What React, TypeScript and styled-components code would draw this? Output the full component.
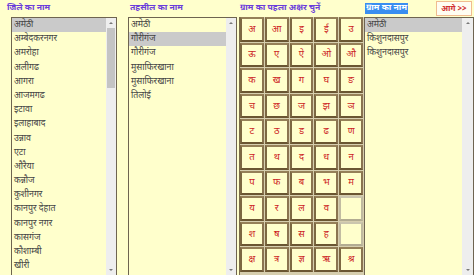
import React from 'react';
import styled, { createGlobalStyle } from 'styled-components';

const Global = createGlobalStyle`
  html, body { margin: 0; padding: 0; background: #ffffcc; }
  body { font-family: "Noto Sans Devanagari", "Noto Sans", "DejaVu Sans", sans-serif; }
`;

const Page = styled.div`
  width: 474px;
  height: 275px;
  overflow: hidden;
  display: grid;
  grid-template-columns: 128px 111px 125px 110px;
  background: #ffffcc;
`;

const Column = styled.div`
  display: flex;
  flex-direction: column;
  min-width: 0;
`;

const Header = styled.div<{ $pad?: number }>`
  height: 17px;
  display: flex;
  align-items: center;
  justify-content: space-between;
  padding-left: ${(p) => p.$pad ?? 0}px;
  box-sizing: border-box;
`;

const Title = styled.span<{ $hl?: boolean }>`
  font-size: 8.6px;
  font-weight: bold;
  line-height: 11px;
  color: ${(p) => (p.$hl ? '#ffffff' : '#6a3ddb')};
  background: ${(p) => (p.$hl ? '#3a8ef0' : 'transparent')};
  padding: ${(p) => (p.$hl ? '0 1px' : '0')};
  white-space: nowrap;
`;

const NextButton = styled.button`
  height: 15px;
  width: 36px;
  margin-right: 2px;
  padding: 0;
  border: 1px solid #f0bc90;
  background: #fffdf2;
  color: #d03030;
  font-family: "Noto Sans Devanagari", "Noto Sans", sans-serif;
  font-size: 8px;
  line-height: 12px;
  font-weight: bold;
`;

const ListBox = styled.div<{ $width: number; $ml?: number }>`
  width: ${(p) => p.$width}px;
  margin-left: ${(p) => p.$ml ?? 0}px;
  height: 259px;
  box-sizing: border-box;
  border: 1px solid #6e6450;
  background: #ffffcc;
  display: flex;
  overflow: hidden;
`;

const Items = styled.div`
  flex: 1;
  min-width: 0;
  display: flex;
  flex-direction: column;
`;

const Item = styled.div<{ $sel?: boolean }>`
  height: 14.2px;
  line-height: 14.2px;
  font-size: 8.8px;
  color: #444444;
  padding-left: 2px;
  white-space: nowrap;
  background: ${(p) => (p.$sel ? '#cacaca' : 'transparent')};
`;

const ScrollBar = styled.div<{ $w?: number }>`
  width: ${(p) => p.$w ?? 10}px;
  background: #eeeeee;
  display: flex;
  flex-direction: column;
  align-items: center;
`;

const ArrowUp = styled.div`
  height: 10px;
  flex: none;
  display: flex;
  align-items: center;
  &::after {
    content: '';
    border-left: 2px solid transparent;
    border-right: 2px solid transparent;
    border-bottom: 2px solid #777;
  }
`;

const ArrowDown = styled.div`
  height: 10px;
  flex: none;
  display: flex;
  align-items: center;
  &::after {
    content: '';
    border-left: 2px solid transparent;
    border-right: 2px solid transparent;
    border-top: 2px solid #777;
  }
`;

const Track = styled.div`
  flex: 1;
  align-self: stretch;
  display: flex;
  flex-direction: column;
  padding: 0 1px;
`;

const Thumb = styled.div<{ $h: number }>`
  height: ${(p) => p.$h}px;
  background: #c4c4c4;
`;

const LetterGrid = styled.div`
  width: 125px;
  height: 259px;
  box-sizing: border-box;
  background: #d6ceae;
  border-left: 1px solid #7a6c4c;
  display: grid;
  grid-template-columns: repeat(5, 1fr);
  grid-auto-rows: 24.6px;
  gap: 1px;
  padding: 0 1px 0 0;
  align-content: start;
`;

const Cell = styled.div<{ $empty?: boolean }>`
  box-sizing: border-box;
  background: #ffffcc;
  border: 2px solid;
  border-color: ${(p) =>
    p.$empty ? '#cbc6ae #c0ba9f #b2ac92 #c2bca2' : '#958058 #8a7450 #6a5632 #7c6842'};
  display: flex;
  align-items: center;
  justify-content: center;
  color: #cc2424;
  font-size: 9.5px;
`;

const districts = [
  'अमेठी', 'अम्बेदकरनगर', 'अमरोहा', 'अलीगढ', 'आगरा', 'आजमगढ', 'इटावा', 'इलाहाबाद',
  'उन्नाव', 'एटा', 'औरैया', 'कन्नौज', 'कुशीनगर', 'कानपुर देहात', 'कानपुर नगर',
  'कासगंज', 'कौशाम्बी', 'खीरी',
];
const tehsils = ['अमेठी', 'गौरीगंज', 'गौरीगंज', 'मुसाफिरखाना', 'मुसाफिरखाना', 'तिलोई'];
const villages = ['अमेठी', 'किशुनदासपुर', 'किशुनदासपुर'];
const letters = [
  'अ', 'आ', 'इ', 'ई', 'उ',
  'ऊ', 'ए', 'ऐ', 'ओ', 'औ',
  'क', 'ख', 'ग', 'घ', 'ङ',
  'च', 'छ', 'ज', 'झ', 'ञ',
  'ट', 'ठ', 'ड', 'ढ', 'ण',
  'त', 'थ', 'द', 'ध', 'न',
  'प', 'फ', 'ब', 'भ', 'म',
  'य', 'र', 'ल', 'व', '',
  'श', 'ष', 'स', 'ह', '',
  'क्ष', 'त्र', 'ज्ञ', 'ऋ', 'श्र',
];

function Scroll({ thumb, w }: { thumb?: number; w?: number }) {
  return (
    <ScrollBar $w={w}>
      <ArrowUp />
      <Track>{thumb ? <Thumb $h={thumb} /> : null}</Track>
      <ArrowDown />
    </ScrollBar>
  );
}

export default function App() {
  return (
    <>
      <Global />
      <Page>
        <Column>
          <Header $pad={7}>
            <Title>जिले का नाम</Title>
          </Header>
          <ListBox $width={106} $ml={11}>
            <Items>
              {districts.map((d, i) => (
                <Item key={i} $sel={i === 0}>{d}</Item>
              ))}
            </Items>
            <Scroll thumb={60} />
          </ListBox>
        </Column>
        <Column>
          <Header $pad={2}>
            <Title>तहसील का नाम</Title>
          </Header>
          <ListBox $width={109}>
            <Items>
              {tehsils.map((d, i) => (
                <Item key={i} $sel={i === 1}>{d}</Item>
              ))}
            </Items>
            <Scroll />
          </ListBox>
        </Column>
        <Column>
          <Header $pad={1}>
            <Title>ग्राम का पहला अक्षर चुनें</Title>
          </Header>
          <LetterGrid>
            {letters.map((l, i) => (
              <Cell key={i} $empty={l === ''}>{l}</Cell>
            ))}
          </LetterGrid>
        </Column>
        <Column>
          <Header $pad={1}>
            <Title $hl>ग्राम का नाम</Title>
            <NextButton>आगे &gt;&gt;</NextButton>
          </Header>
          <ListBox $width={110}>
            <Items>
              {villages.map((d, i) => (
                <Item key={i} $sel={i === 0}>{d}</Item>
              ))}
            </Items>
            <Scroll w={11} />
          </ListBox>
        </Column>
      </Page>
    </>
  );
}
